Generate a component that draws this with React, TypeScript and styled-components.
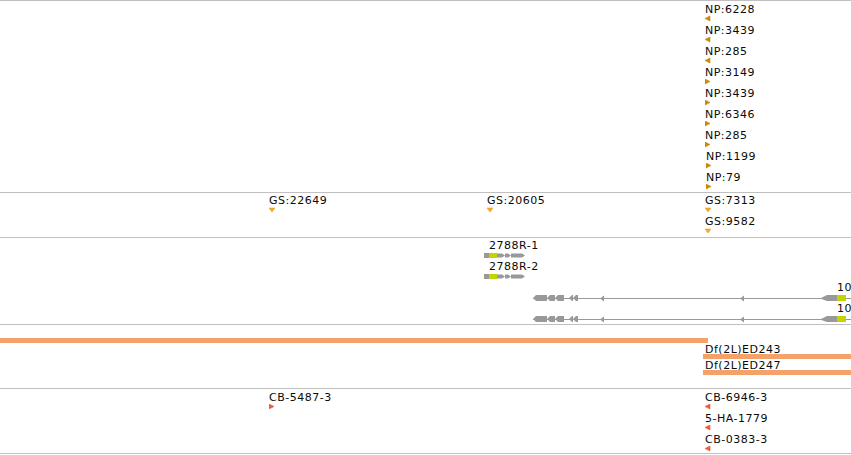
import React from 'react';
import styled, { createGlobalStyle } from 'styled-components';

const GlobalStyle = createGlobalStyle`
  html, body {
    margin: 0;
    padding: 0;
    background: #ffffff;
  }
  body {
    font-family: 'DejaVu Sans', 'Noto Sans', sans-serif;
    overflow: hidden;
  }
`;

const GRAY = '#999999';
const CDS = '#c5d300';
const NP_COLOR = '#cc8800';
const GS_COLOR = '#f0a62a';
const CB_COLOR = '#f05a3a';
const DF_COLOR = '#f5a26a';

const Browser = styled.div`
  width: 851px;
  height: 455px;
  overflow: hidden;
  background: #fff;
`;

const Track = styled.section<{ $height: number; $padTop: number; $last?: boolean }>`
  box-sizing: border-box;
  height: ${p => p.$height}px;
  padding-top: ${p => p.$padTop}px;
  border-top: 1px solid #c0c0c0;
  border-bottom: ${p => (p.$last ? '1px solid #c0c0c0' : 'none')};
  display: flex;
  flex-direction: column;
  overflow: hidden;
`;

const Row = styled.div<{ $pitch: number }>`
  position: relative;
  height: ${p => p.$pitch}px;
  flex: none;
`;

// features sit at their genome coordinate on the track canvas
const Feature = styled.div<{ $x: number }>`
  position: absolute;
  top: 0;
  left: ${p => p.$x}px;
  display: flex;
  flex-direction: column;
  align-items: flex-start;
`;

const Label = styled.div<{ $indent?: number; $lh?: number }>`
  margin-left: ${p => p.$indent ?? 0}px;
  height: ${p => p.$lh ?? 13}px;
  line-height: ${p => p.$lh ?? 13}px;
  font-size: 11px;
  letter-spacing: 0.5px;
  color: #0a0a0a;
  white-space: nowrap;
`;

const GlyphBox = styled.div<{ $h: number }>`
  height: ${p => p.$h}px;
  line-height: 0;
  svg {
    display: block;
  }
`;

const Bar = styled.div<{ $w: number }>`
  width: ${p => p.$w}px;
  height: 5px;
  background: ${DF_COLOR};
`;

type Dir = 'left' | 'right' | 'down';

const TRI_POINTS: Record<Dir, string> = {
  left: '5,0 5,5 0,2.5',
  right: '0,0 0,5 5,2.5',
  down: '0,1 6,1 3,5',
};

function Triangle({ dir, color }: { dir: Dir; color: string }) {
  return (
    <GlyphBox $h={6}>
      <svg width="6" height="6" viewBox="0 0 6 6">
        <polygon
          points={TRI_POINTS[dir]}
          fill={color}
          stroke={color}
          strokeWidth="0.6"
          strokeLinejoin="round"
        />
      </svg>
    </GlyphBox>
  );
}

type Point = { label: string; x: number; dir: Dir };

function PointFeature({ f, color }: { f: Point; color: string }) {
  return (
    <Feature $x={f.x}>
      <Label>{f.label}</Label>
      <Triangle dir={f.dir} color={color} />
    </Feature>
  );
}

// exon with a left pointing tip (minus strand)
const leftExon = (x1: number, x2: number) =>
  `${x1},4 ${x1 + 3},1 ${x2},1 ${x2},7 ${x1 + 3},7`;

// exon with a right pointing tip (plus strand)
const rightExon = (x1: number, x2: number) =>
  `${x1},1.5 ${x2 - 3},1.5 ${x2},3.5 ${x2 - 3},5.5 ${x1},5.5`;

function ShortTranscript() {
  return (
    <GlyphBox $h={7}>
      <svg width="45" height="7" viewBox="0 0 45 7">
        <rect x="0" y="1" width="5" height="5" fill={GRAY} />
        <rect x="5" y="1" width="8" height="5" fill={CDS} />
        <polygon points={rightExon(13, 21)} fill={GRAY} />
        <polygon points={rightExon(21, 27)} fill={GRAY} />
        <polygon points={rightExon(27, 41)} fill={GRAY} />
      </svg>
    </GlyphBox>
  );
}

function LongTranscript() {
  const exons: [number, number][] = [
    [0, 14],
    [14, 22],
    [22, 31],
    [36, 40],
    [40, 45],
  ];
  const arrows = [67, 207];
  return (
    <GlyphBox $h={7}>
      <svg width="318" height="8" viewBox="0 0 318 8">
        <rect x="0" y="4" width="318" height="1" fill={GRAY} />
        {exons.map(([a, b]) => (
          <polygon key={a} points={leftExon(a, b)} fill={GRAY} />
        ))}
        {arrows.map(a => (
          <polygon key={a} points={`${a},4.5 ${a + 4},1.5 ${a + 4},7.5`} fill={GRAY} />
        ))}
        <polygon points="287,4.5 294,1 304,1 304,7 294,7" fill={GRAY} />
        <rect x="304" y="1" width="9" height="6" fill={CDS} />
      </svg>
    </GlyphBox>
  );
}

const npRows: Point[] = [
  { label: 'NP:6228', x: 705, dir: 'left' },
  { label: 'NP:3439', x: 705, dir: 'left' },
  { label: 'NP:285', x: 705, dir: 'left' },
  { label: 'NP:3149', x: 705, dir: 'right' },
  { label: 'NP:3439', x: 705, dir: 'right' },
  { label: 'NP:6346', x: 705, dir: 'right' },
  { label: 'NP:285', x: 705, dir: 'right' },
  { label: 'NP:1199', x: 706, dir: 'right' },
  { label: 'NP:79', x: 706, dir: 'right' },
];

const gsRows: Point[][] = [
  [
    { label: 'GS:22649', x: 269, dir: 'down' },
    { label: 'GS:20605', x: 487, dir: 'down' },
    { label: 'GS:7313', x: 705, dir: 'down' },
  ],
  [{ label: 'GS:9582', x: 705, dir: 'down' }],
];

const cbRows: Point[][] = [
  [
    { label: 'CB-5487-3', x: 269, dir: 'right' },
    { label: 'CB-6946-3', x: 705, dir: 'left' },
  ],
  [{ label: '5-HA-1779', x: 705, dir: 'left' }],
  [{ label: 'CB-0383-3', x: 705, dir: 'left' }],
];

const dfRows = [
  { label: '', x: 0, w: 708 },
  { label: 'Df(2L)ED243', x: 703, w: 148 },
  { label: 'Df(2L)ED247', x: 703, w: 148 },
];

export default function App() {
  return (
    <>
      <GlobalStyle />
      <Browser>
        <Track $height={192} $padTop={2}>
          {npRows.map((f, i) => (
            <Row key={i} $pitch={21}>
              <PointFeature f={f} color={NP_COLOR} />
            </Row>
          ))}
        </Track>

        <Track $height={45} $padTop={1}>
          {gsRows.map((row, i) => (
            <Row key={i} $pitch={21}>
              {row.map(f => (
                <PointFeature key={f.label} f={f} color={GS_COLOR} />
              ))}
            </Row>
          ))}
        </Track>

        <Track $height={87} $padTop={1}>
          {['2788R-1', '2788R-2'].map(name => (
            <Row key={name} $pitch={21}>
              <Feature $x={484}>
                <Label $indent={5}>{name}</Label>
                <ShortTranscript />
              </Feature>
            </Row>
          ))}
          {[0, 1].map(i => (
            <Row key={i} $pitch={21}>
              <Feature $x={533}>
                <Label $indent={304}>10</Label>
                <LongTranscript />
              </Feature>
            </Row>
          ))}
        </Track>

        <Track $height={64} $padTop={4}>
          {dfRows.map((d, i) => (
            <Row key={i} $pitch={16}>
              <Feature $x={d.x}>
                <Label $indent={2} $lh={9}>
                  {d.label}
                </Label>
                <Bar $w={d.w} />
              </Feature>
            </Row>
          ))}
        </Track>

        <Track $height={66} $padTop={2} $last>
          {cbRows.map((row, i) => (
            <Row key={i} $pitch={21}>
              {row.map(f => (
                <PointFeature key={f.label} f={f} color={CB_COLOR} />
              ))}
            </Row>
          ))}
        </Track>
      </Browser>
    </>
  );
}
